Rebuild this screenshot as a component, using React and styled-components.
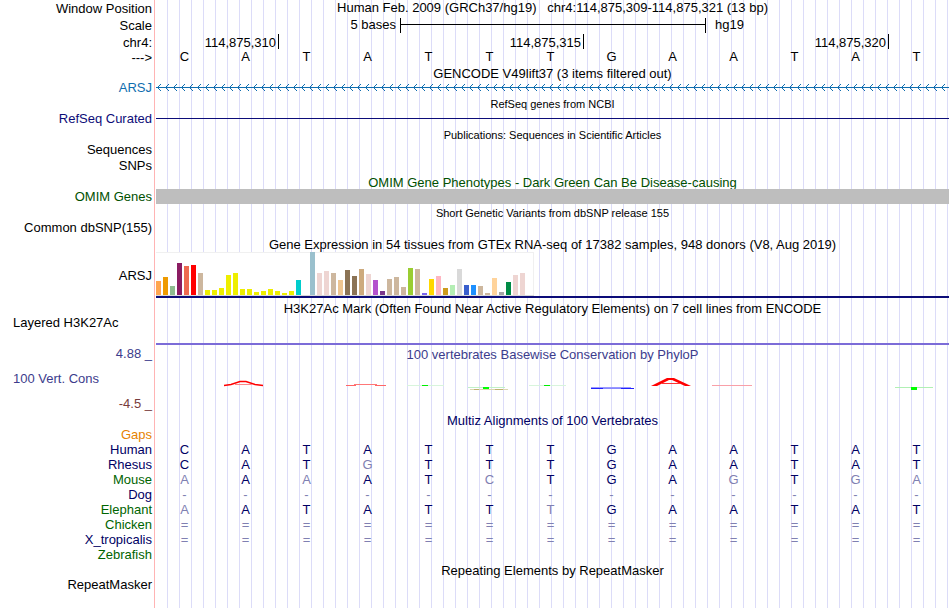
import React from "react";
import styled, { createGlobalStyle, css } from "styled-components";

const GlobalStyle = createGlobalStyle`
  *, *::before, *::after { box-sizing: border-box; }
  html, body { margin: 0; background: #fff; }
  body { font: 13px/15px "Liberation Sans", Arial, Helvetica, sans-serif; color: #000; }
`;

const navy = "#000064";
const green = "#006400";
const gencodeBlue = "#0f6eaf";
const phyloBlue = "#3c3c8c";

/* The guide lines and the red margin run behind every row. */
const Browser = styled.main`
  min-height: 100vh;
  margin-right: 1px;
  background:
    linear-gradient(#ffb4b4, #ffb4b4) 154px 0 / 1px 100% no-repeat,
    repeating-linear-gradient(to right, #dcdcf8 0 1px, transparent 1px 12px) 167px 0 no-repeat;
`;

const Row = styled.div`
  display: grid;
  grid-template-columns: 154px minmax(0, 1fr);
  min-height: ${(p) => p.$height || 15}px;
  color: ${(p) => p.$color || "inherit"};
`;

const Label = styled.div`
  display: flex;
  align-items: ${(p) => p.$align || "flex-start"};
  justify-content: ${(p) => (p.$left ? "flex-start" : "flex-end")};
  padding: ${(p) => (p.$left ? "0 0 0 13px" : "0 2px 0 0")};
  white-space: pre;
`;

const Plot = styled.div`
  display: flex;
  flex-direction: column;
  min-width: 0;
  padding-left: 2px;
`;

const Title = styled.h2`
  margin: 0;
  height: ${(p) => (p.$small ? 16 : 15)}px;
  padding: ${(p) => (p.$small ? 3 : 1)}px 0 0 156px;
  font-size: ${(p) => (p.$small ? 11 : 13)}px;
  line-height: ${(p) => (p.$small ? 13 : 15)}px;
  font-weight: 400;
  text-align: center;
  white-space: pre;
  color: ${(p) => p.$color || "inherit"};
`;

const WindowTitle = styled.h1`
  margin: 0;
  font-size: 13px;
  font-weight: 400;
  line-height: 15px;
  text-align: center;
  white-space: pre;
`;

const ScaleGrid = styled.div`
  display: grid;
  grid-template-columns: 4fr 5fr 4fr;
`;

const ScaleText = styled.span`
  padding: 0 4px 0 10px;
  text-align: ${(p) => p.$align};
`;

const ScaleBar = styled.span`
  height: 15px;
  margin: 1px -1px 0 0;
  border: solid #000;
  border-width: 0 1px;
  background: linear-gradient(#000, #000) 0 6px / 100% 1px no-repeat;
`;

const Ruler = styled.div`
  display: grid;
  grid-template-columns: 2fr 5fr 5fr 1fr;
`;

const Tick = styled.span`
  height: 15px;
  margin-right: -1px;
  padding: 1px 2px 0 0;
  border-right: 1px solid #000;
  text-align: right;
`;

const Bases = styled.div`
  display: grid;
  grid-template-columns: repeat(13, minmax(0, 1fr));
  padding-right: 2px;
  text-align: center;
  line-height: ${(p) => p.$line || 15}px;
  color: ${(p) => p.$color || "inherit"};
`;

const Base = styled.span`
  ${(p) => p.$faded && css`color: #8080b2;`}
`;

const ArrowLine = styled.svg`
  display: block;
  width: 100%;
  height: 15px;
`;

const Rule = styled.div`
  height: ${(p) => p.$thick || 1}px;
  margin-top: ${(p) => p.$top || 0}px;
  background: ${(p) => p.$color};
`;

const Block = styled.div`
  height: 15px;
  background: #bebebe;
`;

const Expression = styled.svg`
  display: block;
  width: 378px;
  height: 44px;
  margin-top: 1px;
`;

const Limits = styled.div`
  display: flex;
  flex-direction: column;
  justify-content: space-between;
  padding: 1px 2px 1px 13px;
  color: ${phyloBlue};
`;

const Limit = styled.span`
  align-self: ${(p) => (p.$left ? "flex-start" : "flex-end")};
  color: ${(p) => (p.$low ? "#783c3c" : "inherit")};
  white-space: pre;
`;

const WiggleTitle = styled.h2`
  margin: 0;
  padding: 2px 0 0 2px;
  font-size: 13px;
  font-weight: 400;
  line-height: 15px;
  text-align: center;
  color: ${phyloBlue};
`;

const Conservation = styled(Bases)`
  padding-top: 14px;
`;

const Score = styled.svg`
  display: block;
  width: 61px;
  height: 16px;
`;

const tissues = [
  ["#ffa54f", 14], ["#ee9a00", 18], ["#8fbc8f", 9], ["#8b1c62", 32], ["#ee6a50", 29], ["#ff0000", 30],
  ["#cdb79e", 22], ["#eeee00", 5], ["#eeee00", 5], ["#eeee00", 7], ["#eeee00", 20], ["#eeee00", 22],
  ["#eeee00", 6], ["#eeee00", 6], ["#eeee00", 3], ["#eeee00", 4], ["#eeee00", 6], ["#eeee00", 4],
  ["#eeee00", 2], ["#eeee00", 4], ["#00cdcd", 15], ["#ee82ee", 0], ["#9ac0cd", 43], ["#eed5d2", 22],
  ["#eed5d2", 24], ["#cdb79e", 22], ["#eec591", 15], ["#8b7355", 25], ["#8b7355", 19], ["#cdaa7d", 26],
  ["#eed5d2", 21], ["#b452cd", 15], ["#7a378b", 4], ["#cdb79e", 16], ["#cdb79e", 18], ["#cdb79e", 8],
  ["#9acd32", 27], ["#cdb79e", 26], ["#7a67ee", 2], ["#ffd700", 16], ["#ffb6c1", 19], ["#cd9b1d", 7],
  ["#b4eeb4", 10], ["#d9d9d9", 26], ["#3a5fcd", 10], ["#1e90ff", 10], ["#cdb79e", 9], ["#cdb79e", 2],
  ["#ffd39b", 17], ["#a6a6a6", 3], ["#008b45", 13], ["#eed5d2", 20], ["#eed5d2", 22], ["#ff00ff", 0],
];

const sequence = "CATATTTGAATAT";

/* Lower-case letters differ from the human base and are drawn faded. */
const species = [
  ["Human", navy, "CATATTTGAATAT"],
  ["Rhesus", navy, "CATgTTTGAATAT"],
  ["Mouse", green, "aAaATcTGAgTga"],
  ["Dog", navy, "-------------"],
  ["Elephant", green, "aATATTtGAATAT"],
  ["Chicken", green, "============="],
  ["X_tropicalis", navy, "============="],
  ["Zebrafish", green, ""],
];

/* One flattened letter per base; its height is the conservation score. */
const scores = [
  null,
  <><path d="M9 9.5 L16 8.5 L25 5.5 H31 L40 8.5 L48 9.5" fill="none" stroke="#f00" strokeWidth="1.5" /><path d="M20 8.5H37" stroke="#f88" /></>,
  null,
  <><path d="M9 9.5H19M38 9.5H49" stroke="#f66" /><path d="M17 8.5H40" stroke="#f77" /></>,
  <><path d="M9 9.5H46" stroke="#d8f5dc" /><path d="M24 9.5H30" stroke="#0e0" /></>,
  <><path d="M9 11.5H46" stroke="#c0f0c8" /><path d="M11 13.5H49" stroke="#dcd6b0" /><path d="M15 13.5H20M36 13.5H44" stroke="#c0b070" /><path d="M24 12H30" stroke="#0f0" strokeWidth="2" /></>,
  <><path d="M9 9.5H46" stroke="#d8f5dc" /><path d="M24 9.5H30" stroke="#0e0" /></>,
  <><path d="M10 11.5H50" stroke="#99f" /><path d="M10 12.5H22M40 12.5H53" stroke="#22f" /><path d="M22 12.5H40" stroke="#88f" /></>,
  <><path d="M9 10 L25 2 H32 L49 10 H43 L30 4 H27 L15 10 Z" fill="#f00" /><path d="M20 7.5H38" stroke="#f33" /></>,
  <path d="M9 9.5H49" stroke="#f9a0a8" />,
  null,
  null,
  <><path d="M9 11.5H47" stroke="#b0f0b4" /><path d="M25 12.5H31" stroke="#0f0" strokeWidth="3" /></>,
];

function Sequence({ text, line, color }) {
  return (
    <Bases $line={line} $color={color}>
      {[...text].map((ch, i) => (
        <Base key={i} $faded={ch !== ch.toUpperCase() || ch === "-" || ch === "="}>
          {ch.toUpperCase()}
        </Base>
      ))}
    </Bases>
  );
}

export default function App() {
  return (
    <>
      <GlobalStyle />
      <Browser>
        <Row $height={17}>
          <Label $align="center">Window Position</Label>
          <Plot><WindowTitle>{"Human Feb. 2009 (GRCh37/hg19)   chr4:114,875,309-114,875,321 (13 bp)"}</WindowTitle></Plot>
        </Row>
        <Row $height={17}>
          <Label $align="center">Scale</Label>
          <Plot>
            <ScaleGrid>
              <ScaleText $align="right">5 bases</ScaleText>
              <ScaleBar />
              <ScaleText $align="left">hg19</ScaleText>
            </ScaleGrid>
          </Plot>
        </Row>
        <Row $height={16}>
          <Label $align="flex-end">chr4:</Label>
          <Plot>
            <Ruler>
              <Tick>114,875,310</Tick>
              <Tick>114,875,315</Tick>
              <Tick>114,875,320</Tick>
            </Ruler>
          </Plot>
        </Row>
        <Row>
          <Label>{"--->"}</Label>
          <Sequence text={sequence} line={13} />
        </Row>

        <Title>GENCODE V49lift37 (3 items filtered out)</Title>
        <Row $color={gencodeBlue}>
          <Label>ARSJ</Label>
          <Plot>
            <ArrowLine aria-hidden="true">
              <defs>
                <pattern id="strand" width="8" height="15" patternUnits="userSpaceOnUse">
                  <path
                    d="M1 7h1v1h-1zM2 6h1v1h-1zM2 8h1v1h-1zM3 5h1v1h-1zM3 9h1v1h-1zM4 4h1v1h-1zM4 10h1v1h-1z"
                    fill={gencodeBlue}
                  />
                </pattern>
              </defs>
              <rect y="7" width="100%" height="1" fill={gencodeBlue} />
              <rect width="100%" height="15" fill="url(#strand)" />
            </ArrowLine>
          </Plot>
        </Row>

        <Title $small>RefSeq genes from NCBI</Title>
        <Row $color="#0c0c78">
          <Label>RefSeq Curated</Label>
          <Plot><Rule $top={7} $color="#0c0c78" /></Plot>
        </Row>

        <Title $small>Publications: Sequences in Scientific Articles</Title>
        <Row $height={16}><Label>Sequences</Label></Row>
        <Row $height={16}><Label>SNPs</Label></Row>

        <Title $color="#005000">OMIM Gene Phenotypes - Dark Green Can Be Disease-causing</Title>
        <Row $color="#005000">
          <Label>OMIM Genes</Label>
          <Plot><Block /></Plot>
        </Row>

        <Title $small>Short Genetic Variants from dbSNP release 155</Title>
        <Row $height={16}><Label>Common dbSNP(155)</Label></Row>

        <Title>Gene Expression in 54 tissues from GTEx RNA-seq of 17382 samples, 948 donors (V8, Aug 2019)</Title>
        <Row $height={49}>
          <Label $align="center">ARSJ</Label>
          <Plot>
            <Expression role="img" aria-label="Expression by tissue">
              <rect width="378" height="44" fill="#f0f0f0" />
              <rect y="1" width="377" height="42" fill="#fff" />
              <rect y="43" width="378" height="1" fill="#d8d8d8" />
              {tissues.map(([color, h], i) => (
                <rect key={i} x={i * 7} y={43 - h} width="5" height={h} fill={color} />
              ))}
            </Expression>
            <Rule $thick={2} $color="#0c0c78" />
          </Plot>
        </Row>

        <Title>H3K27Ac Mark (Often Found Near Active Regulatory Elements) on 7 cell lines from ENCODE</Title>
        <Row $height={30}>
          <Label $left>Layered H3K27Ac</Label>
          <Plot><Rule $top={28} $thick={2} $color="#7c6cd8" /></Plot>
        </Row>

        <Row $height={67}>
          <Limits>
            <Limit>4.88 _</Limit>
            <Limit $left>100 Vert. Cons</Limit>
            <Limit $low>-4.5 _</Limit>
          </Limits>
          <div>
            <WiggleTitle>100 vertebrates Basewise Conservation by PhyloP</WiggleTitle>
            <Conservation>
              {scores.map((drawing, i) => <Score key={i} aria-hidden="true">{drawing}</Score>)}
            </Conservation>
          </div>
        </Row>

        <Title $color={navy}>Multiz Alignments of 100 Vertebrates</Title>
        <Row $color="#e68200"><Label>Gaps</Label></Row>
        {species.map(([name, color, text]) => (
          <Row key={name} $color={color}>
            <Label>{name}</Label>
            <Sequence text={text} color={navy} />
          </Row>
        ))}

        <Title>Repeating Elements by RepeatMasker</Title>
        <Row><Label>RepeatMasker</Label></Row>
      </Browser>
    </>
  );
}
